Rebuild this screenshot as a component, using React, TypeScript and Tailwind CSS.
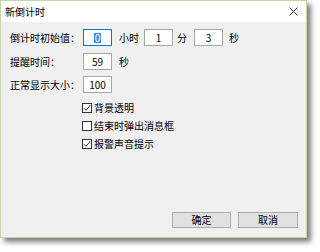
import { useState } from 'react';

function NumBox({ value, focused }: { value: string; focused?: boolean }) {
  return (
    <div
      className={`w-[29px] h-[17px] bg-white border flex items-center justify-center text-[10px] leading-none ${
        focused ? 'border-[#0078d7]' : 'border-[#a6a6a6]'
      }`}
    >
      {focused ? <span className="bg-[#3b8de0] text-white px-[1px]">{value}</span> : value}
    </div>
  );
}

function Check({ label, checked }: { label: string; checked: boolean }) {
  return (
    <div className="flex items-center h-[14px] ml-[72px]">
      <div className="w-[10px] h-[10px] bg-white border border-[#333333] flex items-center justify-center">
        {checked && (
          <svg width="8" height="8" viewBox="0 0 8 8">
            <path d="M0.8 4.2 L3 6.4 L7.2 1.2" fill="none" stroke="#333333" strokeWidth="1" />
          </svg>
        )}
      </div>
      <span className="ml-[2px] text-[10px] leading-none">{label}</span>
    </div>
  );
}

export default function App() {
  const [opts] = useState({ transparent: true, popup: false, sound: true });

  return (
    <div
      className="w-[320px] h-[252px] bg-white text-black"
      style={{ fontFamily: '"Noto Sans CJK SC", "Liberation Sans", sans-serif' }}
    >
      <div className="w-[307px] h-[238px] flex flex-col border border-[#c2d8a6] shadow-[4px_4px_5px_rgba(0,0,0,0.5)]">
        {/* 标题栏 */}
        <div className="h-[21px] bg-white flex items-center justify-between pl-[4px] pr-[8px]">
          <span className="text-[10px] leading-none">新倒计时</span>
          <svg width="9" height="9" viewBox="0 0 9 9">
            <path d="M0.5 0.5 L8.5 8.5 M8.5 0.5 L0.5 8.5" stroke="#333333" strokeWidth="1" />
          </svg>
        </div>

        <div className="flex-1 bg-[#f0f0f0] flex flex-col pt-[7px] pl-[9px] text-[10px] leading-none">
          <div className="flex items-center h-[17px]">
            <span className="w-[73px]">倒计时初始值：</span>
            <NumBox value="0" focused />
            <span className="ml-[7px] w-[25px]">小时</span>
            <NumBox value="1" />
            <span className="ml-[4px] w-[17px]">分</span>
            <NumBox value="3" />
            <span className="ml-[6px]">秒</span>
          </div>

          <div className="flex items-center h-[17px] mt-[7px]">
            <span className="w-[73px]">提醒时间：</span>
            <NumBox value="59" />
            <span className="ml-[7px]">秒</span>
          </div>

          <div className="flex items-center h-[17px] mt-[6px]">
            <span className="w-[73px]">正常显示大小：</span>
            <NumBox value="100" />
          </div>

          <div className="flex flex-col gap-[4px] mt-[8px]">
            <Check label="背景透明" checked={opts.transparent} />
            <Check label="结束时弹出消息框" checked={opts.popup} />
            <Check label="报警声音提示" checked={opts.sound} />
          </div>

          <div className="flex-1" />

          <div className="flex justify-end gap-[7px] pr-[8px] pb-[9px]">
            <button className="w-[59px] h-[16px] bg-[#e1e1e1] border border-[#adadad] text-[10px] leading-none">
              确定
            </button>
            <button className="w-[60px] h-[16px] bg-[#e1e1e1] border border-[#adadad] text-[10px] leading-none">
              取消
            </button>
          </div>
        </div>
      </div>
    </div>
  );
}
